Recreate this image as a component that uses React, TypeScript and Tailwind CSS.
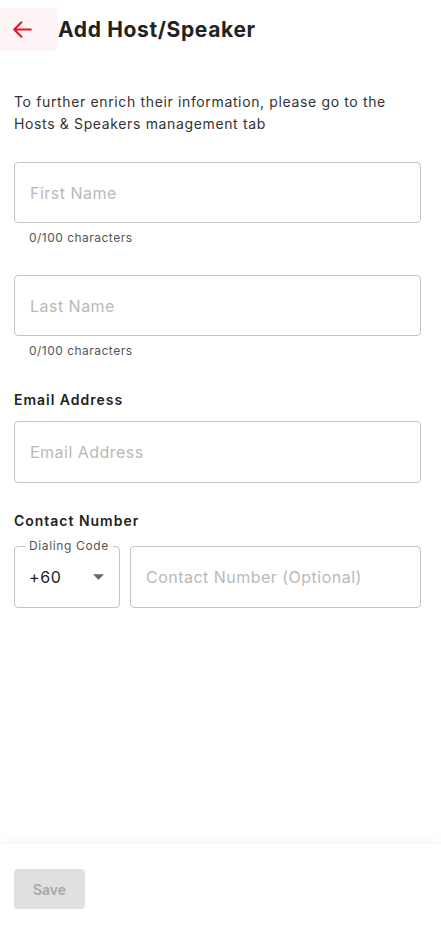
import { useState } from 'react'

function CharCount({ value }: { value: string }) {
  return <p className="mt-[8px] ml-[15px] text-[12px] leading-[14px] text-[#555] tracking-[0.04em]">{value.length}/100 characters</p>
}

const inputCls =
  'w-full h-[61px] px-[15px] rounded-[4px] border border-[#c4c4c4] text-[16px] tracking-[0.03em] placeholder:text-[#b9b9b9] outline-none'

export default function App() {
  const [firstName, setFirstName] = useState('')
  const [lastName, setLastName] = useState('')

  return (
    <div className="min-h-[925px] flex flex-col bg-white text-[#222] font-['Inter','Noto_Sans',sans-serif] tracking-[0.04em]">
      {/* Header */}
      <div className="flex items-center h-[43px] mt-[8px]">
        <button className="w-[58px] h-[43px] bg-[#fdf5f5] rounded-r-[4px] flex items-center pl-[10px]">
          <svg className="w-[25px] h-[25px] text-[#e0162b]" fill="none" stroke="currentColor" viewBox="0 0 24 24">
            <path strokeLinecap="round" strokeLinejoin="round" strokeWidth={1.9} d="M20 12H4m0 0l7-7m-7 7l7 7" />
          </svg>
        </button>
        <h1 className="text-[21px] font-bold">Add Host/Speaker</h1>
      </div>

      {/* Content */}
      <div className="flex-1 pl-[14px] pr-[20px] pt-[40px]">
        <p className="text-[14px] leading-[22px] text-[#333] max-w-[380px]">
          To further enrich their information, please go to the Hosts &amp; Speakers management tab
        </p>

        <input
          value={firstName}
          onChange={e => setFirstName(e.target.value)}
          placeholder="First Name"
          className={`mt-[27px] ${inputCls}`}
        />
        <CharCount value={firstName} />

        <input
          value={lastName}
          onChange={e => setLastName(e.target.value)}
          placeholder="Last Name"
          className={`mt-[30px] ${inputCls}`}
        />
        <CharCount value={lastName} />

        <label className="block mt-[31px] text-[14px] font-semibold tracking-[0.07em]">Email Address</label>
        <input placeholder="Email Address" className={`mt-[11px] ${inputCls} h-[62px]`} />

        <label className="block mt-[27px] text-[14px] font-semibold tracking-[0.07em]">Contact Number</label>
        <div className="mt-[15px] flex gap-[10px]">
          <div className="relative w-[106px] h-[62px] shrink-0 rounded-[4px] border border-[#c4c4c4] flex items-center pl-[14px]">
            <span className="absolute -top-[8px] left-[10px] bg-white px-[4px] text-[12px] leading-[14px] text-[#555]">Dialing Code</span>
            <span className="text-[16px] text-[#222]">+60</span>
            <svg className="absolute right-[15px] top-[27px] w-[11px] h-[6px] text-[#666]" viewBox="0 0 10 5" fill="currentColor">
              <path d="M0 0l5 5 5-5z" />
            </svg>
          </div>
          <input placeholder="Contact Number (Optional)" className={`flex-1 min-w-0 ${inputCls} h-[62px]`} />
        </div>
      </div>

      {/* Footer */}
      <div className="h-[82px] shadow-[0_-6px_10px_rgba(0,0,0,0.025)] border-t border-[#f6f6f6] px-[14px] pt-[25px]">
        <button disabled className="w-[71px] h-[40px] rounded-[4px] bg-[#e0e0e0] text-[#a8a8a8] text-[14px] font-semibold tracking-normal">
          Save
        </button>
      </div>
    </div>
  )
}
